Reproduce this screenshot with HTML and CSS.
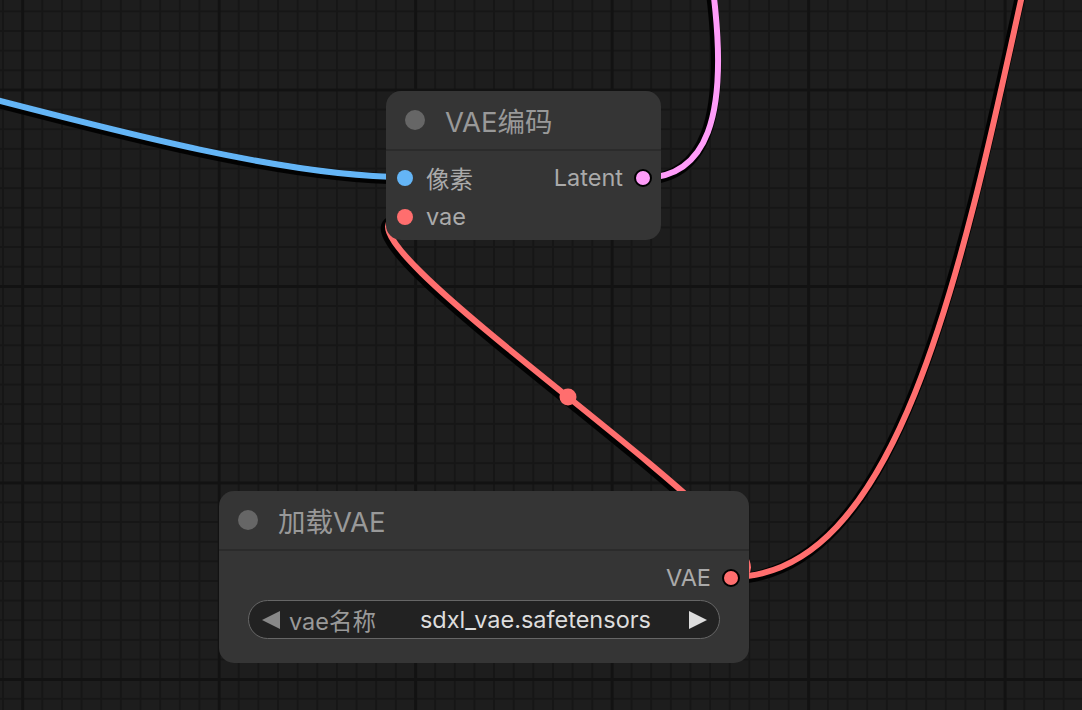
FILE: index.html
```html
<!DOCTYPE html>
<html lang="zh-CN">
<head>
<meta charset="utf-8">
<title>ComfyUI</title>
<link rel="stylesheet" href="styles.css">
</head>
<body>
<div class="canvas">
  <svg class="links" width="1082" height="710" viewBox="0 0 1082 710">
    <defs>
      <path id="link-image" d="M-500,0 C-269.5,0 174.5,177 405,177"/>
      <path id="link-latent" d="M643,178 C909,178 362,-888 628,-888"/>
      <path id="link-vae-a" d="M731,577 C852,577 284,217 405,217"/>
      <path id="link-vae-b" d="M731,577 C1060,577 987,-600 1316,-600"/>
    </defs>
    <g class="link-border" transform="translate(-2 2)">
      <use href="#link-image"/>
      <use href="#link-latent"/>
      <use href="#link-vae-a"/>
      <use href="#link-vae-b"/>
    </g>
    <g class="link-core">
      <use href="#link-image" class="c-image"/>
      <use href="#link-latent" class="c-latent"/>
      <use href="#link-vae-a" class="c-vae"/>
      <use href="#link-vae-b" class="c-vae"/>
    </g>
    <circle class="link-center" cx="568" cy="397" r="8.5"/>
  </svg>

  <div class="node node-encode">
    <div class="node-title">
      <span class="title-dot"></span>
      <span class="title-text">VAE编码</span>
    </div>
    <div class="node-body">
      <div class="slot-row">
        <div class="slot-in"><span class="dot dot-image"></span><span>像素</span></div>
        <div class="slot-out"><span>Latent</span><span class="dot dot-out dot-latent"></span></div>
      </div>
      <div class="slot-row">
        <div class="slot-in"><span class="dot dot-vae"></span><span>vae</span></div>
      </div>
    </div>
  </div>

  <div class="node node-loader">
    <div class="node-title">
      <span class="title-dot"></span>
      <span class="title-text">加载VAE</span>
    </div>
    <div class="node-body">
      <div class="slot-row">
        <div class="slot-out"><span>VAE</span><span class="dot dot-out dot-vae"></span></div>
      </div>
      <div class="widget">
        <svg class="arrow" width="18" height="18" viewBox="0 0 18 18"><polygon points="0,9 18,0 18,18" class="arrow-left"/></svg>
        <span class="widget-label">vae名称</span>
        <span class="widget-value">sdxl_vae.safetensors</span>
        <svg class="arrow" width="18" height="18" viewBox="0 0 18 18"><polygon points="18,9 0,0 0,18" class="arrow-right"/></svg>
      </div>
    </div>
  </div>
</div>
</body>
</html>
```

FILE: styles.css
```css
html, body {
  margin: 0;
  padding: 0;
}

body {
  width: 1082px;
  height: 710px;
  overflow: hidden;
  background: #1d1d1d;
}

.canvas {
  position: relative;
  width: 1082px;
  height: 710px;
  overflow: hidden;
  background-color: #1d1d1d;
  background-image:
    linear-gradient(to right, #121212 3px, transparent 3px),
    linear-gradient(to bottom, #121212 3px, transparent 3px),
    linear-gradient(to right, #161616 2px, transparent 2px),
    linear-gradient(to bottom, #161616 2px, transparent 2px);
  background-size: 196.5px 196.5px, 196.5px 196.5px, 19.65px 19.65px, 19.65px 19.65px;
  background-position: 21.2px 0, 0 88.5px, 2.05px 0, 0 10.4px;
  font-family: Inter, "Noto Sans CJK SC", sans-serif;
}

.links {
  position: absolute;
  left: 0;
  top: 0;
}

.links use {
  fill: none;
  stroke-linecap: round;
}

.link-border use {
  stroke: #000;
  stroke-width: 10.5px;
  opacity: 0.9;
}

.link-core use {
  stroke-width: 6px;
}

.c-image { stroke: #64b5f6; }
.c-latent { stroke: #ff9cf9; }
.c-vae { stroke: #ff6e6e; }

.link-center {
  fill: #ff6e6e;
}

.node {
  position: absolute;
  display: flex;
  flex-direction: column;
  background: #353535;
  border-radius: 15px;
  box-sizing: border-box;
}

.node-encode {
  left: 386px;
  top: 91px;
  width: 275px;
  height: 149px;
}

.node-loader {
  left: 219px;
  top: 491px;
  width: 530px;
  height: 172px;
}

.node-title {
  height: 58px;
  display: flex;
  align-items: center;
  gap: 20px;
  padding-left: 19px;
  border-bottom: 2px solid #2b2b2b;
  font-size: 27.5px;
  color: #999;
  white-space: nowrap;
}

.title-dot {
  width: 20px;
  height: 20px;
  border-radius: 50%;
  background: #666;
  flex: none;
}

.node-body {
  display: flex;
  flex-direction: column;
  padding-top: 7px;
}

.slot-row {
  height: 39.3px;
  display: flex;
  align-items: center;
  font-size: 23.5px;
  color: #aaa;
  white-space: nowrap;
}

.slot-in {
  display: flex;
  align-items: center;
  gap: 13px;
  padding-left: 11px;
}

.slot-out {
  display: flex;
  align-items: center;
  gap: 11px;
  padding-right: 9px;
  margin-left: auto;
}

.dot {
  width: 16px;
  height: 16px;
  border-radius: 50%;
  flex: none;
  box-sizing: border-box;
}

.dot-out {
  width: 18px;
  height: 18px;
  border: 2px solid #000;
}

.dot-image { background: #64b5f6; }
.dot-latent { background: #ff9cf9; }
.dot-vae { background: #ff6e6e; }

.widget {
  margin: 3px 29px 0;
  height: 39px;
  box-sizing: border-box;
  border: 1.5px solid #666;
  border-radius: 20px;
  background: #222;
  display: flex;
  align-items: center;
  padding: 0 12px 0 13px;
  font-size: 23.5px;
  white-space: nowrap;
}

.arrow {
  flex: none;
}

.arrow-left { fill: #888; }
.arrow-right { fill: #ddd; }

.widget-label {
  color: #999;
  margin-left: 9px;
}

.widget-value {
  flex: 1;
  text-align: right;
  color: #ddd;
  margin-right: 38px;
}
```
